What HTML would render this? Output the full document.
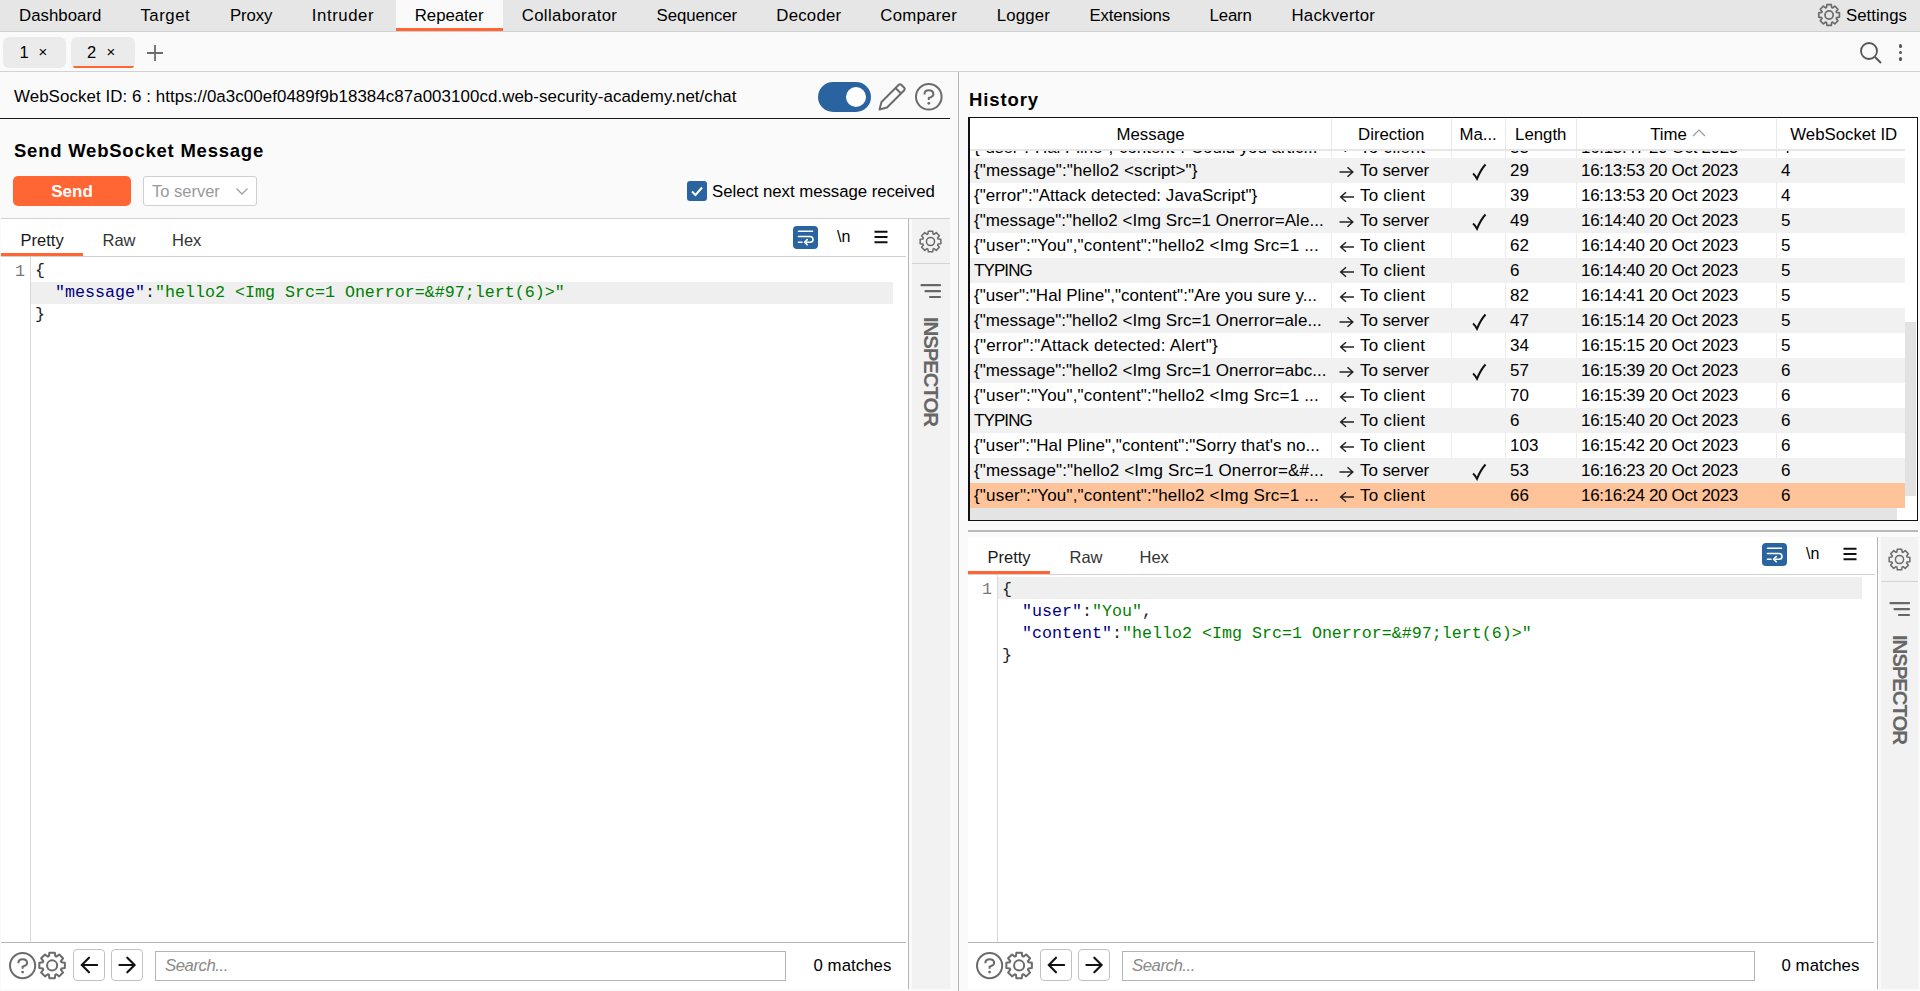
<!DOCTYPE html>
<html><head><meta charset="utf-8">
<style>
*{box-sizing:border-box;margin:0;padding:0}
html,body{width:1920px;height:991px;overflow:hidden;background:#fafafa;font-family:"Liberation Sans",sans-serif;color:#000}
.a{position:absolute}
.t{position:absolute;white-space:nowrap}
.cd{font-family:'Liberation Mono',monospace}
</style></head><body>
<div class="a" style="left:0px;top:0px;width:1920px;height:31px;background:#e6e6e6;"></div>
<div class="a" style="left:0px;top:31px;width:1920px;height:1px;background:#cdd1d2;"></div>
<div class="a" style="left:396px;top:0px;width:107px;height:31px;background:#fafafa;"></div>
<div class="a" style="left:396px;top:28px;width:107px;height:3px;background:#ff6633;"></div>
<div class="t" style="left:19px;top:4.58px;font-size:16.8px;line-height:22px;color:#000;font-weight:normal;font-style:normal;font-family:'Liberation Sans',sans-serif;letter-spacing:0.034px;">Dashboard</div>
<div class="t" style="left:140.4px;top:4.58px;font-size:16.8px;line-height:22px;color:#000;font-weight:normal;font-style:normal;font-family:'Liberation Sans',sans-serif;letter-spacing:0.534px;">Target</div>
<div class="t" style="left:229.9px;top:4.58px;font-size:16.8px;line-height:22px;color:#000;font-weight:normal;font-style:normal;font-family:'Liberation Sans',sans-serif;letter-spacing:-0.089px;">Proxy</div>
<div class="t" style="left:311.8px;top:4.58px;font-size:16.8px;line-height:22px;color:#000;font-weight:normal;font-style:normal;font-family:'Liberation Sans',sans-serif;letter-spacing:0.569px;">Intruder</div>
<div class="t" style="left:414.8px;top:4.58px;font-size:16.8px;line-height:22px;color:#000;font-weight:normal;font-style:normal;font-family:'Liberation Sans',sans-serif;letter-spacing:-0.052px;">Repeater</div>
<div class="t" style="left:521.7px;top:4.58px;font-size:16.8px;line-height:22px;color:#000;font-weight:normal;font-style:normal;font-family:'Liberation Sans',sans-serif;letter-spacing:0.348px;">Collaborator</div>
<div class="t" style="left:656.5px;top:4.58px;font-size:16.8px;line-height:22px;color:#000;font-weight:normal;font-style:normal;font-family:'Liberation Sans',sans-serif;letter-spacing:-0.063px;">Sequencer</div>
<div class="t" style="left:776.3px;top:4.58px;font-size:16.8px;line-height:22px;color:#000;font-weight:normal;font-style:normal;font-family:'Liberation Sans',sans-serif;letter-spacing:0.228px;">Decoder</div>
<div class="t" style="left:880.25px;top:4.58px;font-size:16.8px;line-height:22px;color:#000;font-weight:normal;font-style:normal;font-family:'Liberation Sans',sans-serif;letter-spacing:0.270px;">Comparer</div>
<div class="t" style="left:996.7px;top:4.58px;font-size:16.8px;line-height:22px;color:#000;font-weight:normal;font-style:normal;font-family:'Liberation Sans',sans-serif;letter-spacing:0.198px;">Logger</div>
<div class="t" style="left:1089.5px;top:4.58px;font-size:16.8px;line-height:22px;color:#000;font-weight:normal;font-style:normal;font-family:'Liberation Sans',sans-serif;letter-spacing:-0.168px;">Extensions</div>
<div class="t" style="left:1209.6px;top:4.58px;font-size:16.8px;line-height:22px;color:#000;font-weight:normal;font-style:normal;font-family:'Liberation Sans',sans-serif;letter-spacing:-0.164px;">Learn</div>
<div class="t" style="left:1291.5px;top:4.58px;font-size:16.8px;line-height:22px;color:#000;font-weight:normal;font-style:normal;font-family:'Liberation Sans',sans-serif;letter-spacing:0.248px;">Hackvertor</div>
<div class="t" style="left:1846px;top:4.58px;font-size:16.8px;line-height:22px;color:#000;font-weight:normal;font-style:normal;font-family:'Liberation Sans',sans-serif;letter-spacing:0.037px;">Settings</div>
<svg class="a" style="left:0;top:0;overflow:visible" width="1" height="1"><path d="M1826.52,7.51L1826.90,4.67L1831.30,4.67L1831.68,7.51A7.92,7.92 0 0 1 1832.57,7.88L1834.85,6.14L1837.96,9.25L1836.22,11.53A7.92,7.92 0 0 1 1836.59,12.42L1839.43,12.80L1839.43,17.20L1836.59,17.58A7.92,7.92 0 0 1 1836.22,18.47L1837.96,20.75L1834.85,23.86L1832.57,22.12A7.92,7.92 0 0 1 1831.68,22.49L1831.30,25.33L1826.90,25.33L1826.52,22.49A7.92,7.92 0 0 1 1825.63,22.12L1823.35,23.86L1820.24,20.75L1821.98,18.47A7.92,7.92 0 0 1 1821.61,17.58L1818.77,17.20L1818.77,12.80L1821.61,12.42A7.92,7.92 0 0 1 1821.98,11.53L1820.24,9.25L1823.35,6.14L1825.63,7.88A7.92,7.92 0 0 1 1826.52,7.51Z" fill="none" stroke="#6b6b6b" stroke-width="1.7" stroke-linejoin="round"/><circle cx="1829.1" cy="15" r="4.07" fill="none" stroke="#6b6b6b" stroke-width="1.7"/></svg>
<div class="a" style="left:0px;top:71px;width:1920px;height:1px;background:#d2d4d4;"></div>
<div class="a" style="left:3px;top:37px;width:63px;height:31px;background:#ebebeb;border-radius:6px"></div>
<div class="a" style="left:71px;top:37px;width:64px;height:31px;background:#ebebeb;border-radius:6px"></div>
<div class="a" style="left:73px;top:65.8px;width:60.5px;height:2.2px;background:#ff6633;border-radius:0 0 2px 2px"></div>
<div class="t" style="left:19.5px;top:41.78px;font-size:16.5px;line-height:21px;color:#000;font-weight:normal;font-style:normal;font-family:'Liberation Sans',sans-serif;">1</div>
<div class="t" style="left:87px;top:41.78px;font-size:16.5px;line-height:21px;color:#000;font-weight:normal;font-style:normal;font-family:'Liberation Sans',sans-serif;">2</div>
<div class="t" style="left:38.6px;top:41.60px;font-size:15px;line-height:20px;color:#000;font-weight:normal;font-style:normal;font-family:'Liberation Sans',sans-serif;">×</div>
<div class="t" style="left:106.6px;top:41.60px;font-size:15px;line-height:20px;color:#000;font-weight:normal;font-style:normal;font-family:'Liberation Sans',sans-serif;">×</div>
<svg class="a" style="left:146px;top:44px" width="18" height="18"><path d="M9 1V17M1 9H17" stroke="#6b6b6b" stroke-width="1.8"/></svg>
<svg class="a" style="left:1858px;top:40px" width="26" height="26"><circle cx="11" cy="11" r="8" fill="none" stroke="#555" stroke-width="1.8"/><path d="M17 17L23 23" stroke="#555" stroke-width="2"/></svg>
<div class="a" style="left:1899px;top:44.3px;width:3.4px;height:3.4px;border-radius:50%;background:#555"></div>
<div class="a" style="left:1899px;top:50.8px;width:3.4px;height:3.4px;border-radius:50%;background:#555"></div>
<div class="a" style="left:1899px;top:57.3px;width:3.4px;height:3.4px;border-radius:50%;background:#555"></div>
<div class="a" style="left:958px;top:72px;width:1px;height:919px;background:#b9b4b4;"></div>
<div class="t" style="left:14px;top:85.74px;font-size:16.9px;line-height:22px;color:#000;font-weight:normal;font-style:normal;font-family:'Liberation Sans',sans-serif;letter-spacing:0.066px;">WebSocket ID: 6 : https://0a3c00ef0489f9b18384c87a003100cd.web-security-academy.net/chat</div>
<div class="a" style="left:0px;top:118px;width:950px;height:1.2px;background:#1a1a1a;"></div>
<div class="a" style="left:818px;top:82px;width:53px;height:30px;background:#2a64a0;border-radius:15px"></div>
<div class="a" style="left:846px;top:87px;width:20px;height:20px;border-radius:50%;background:#fff"></div>
<svg class="a" style="left:876px;top:82px" width="32" height="32"><path d="M3.5 27.5 L5.5 20 L22.5 3 Q24 1.6 25.5 3 L28 5.5 Q29.4 7 28 8.5 L11 25.5 Z M19.5 6 L25 11.5" fill="none" stroke="#6b6b6b" stroke-width="2" stroke-linejoin="round"/></svg>
<svg class="a" style="left:913.5px;top:82.0px" width="29.6" height="29.6"><g transform="translate(14.8,14.8)"><circle cx="0" cy="0" r="12.8" fill="none" stroke="#6b6b6b" stroke-width="2"/><path d="M-4.35 -2.39 Q-4.35 -6.53 0 -6.53 Q4.57 -6.53 4.57 -2.61 Q4.57 -0.22 0 1.09 L0 3.26" fill="none" stroke="#6b6b6b" stroke-width="2"/><circle cx="0" cy="6.53" r="1.40" fill="#6b6b6b"/></g></svg>
<div class="t" style="left:14px;top:139.19px;font-size:18.5px;line-height:24px;color:#000;font-weight:bold;font-style:normal;font-family:'Liberation Sans',sans-serif;letter-spacing:0.770px;">Send WebSocket Message</div>
<div class="a" style="left:13px;top:176px;width:118px;height:30px;background:#ff6633;border-radius:5px"></div>
<div class="t" style="left:-228px;width:600px;text-align:center;top:180.61px;font-size:17px;line-height:22px;color:#fff;font-weight:bold;">Send</div>
<div class="a" style="left:143px;top:176px;width:114px;height:30px;background:#fff;border:1px solid #cfcfcf;border-radius:3px"></div>
<div class="t" style="left:152px;top:181.28px;font-size:16.5px;line-height:21px;color:#9a9a9a;font-weight:normal;font-style:normal;font-family:'Liberation Sans',sans-serif;">To server</div>
<svg class="a" style="left:234px;top:185px" width="16" height="12"><path d="M2.5 3.5L8 9L13.5 3.5" fill="none" stroke="#a0a0a0" stroke-width="1.3"/></svg>
<div class="a" style="left:687px;top:181px;width:20px;height:19.5px;background:#2a64a0;border-radius:3px"></div>
<svg class="a" style="left:687px;top:181px" width="20" height="20"><path d="M5 10.5L8.5 14L15 6.5" fill="none" stroke="#fff" stroke-width="2"/></svg>
<div class="t" style="left:712px;top:180.68px;font-size:16.8px;line-height:22px;color:#000;font-weight:normal;font-style:normal;font-family:'Liberation Sans',sans-serif;letter-spacing:-0.040px;">Select next message received</div>
<div class="a" style="left:1px;top:218px;width:949px;height:1px;background:#d0d0d0;"></div>
<div class="a" style="left:1px;top:219px;width:907px;height:770px;background:#fff;"></div>
<div class="a" style="left:908px;top:219px;width:1px;height:770px;background:#b9b4b4;"></div>
<div class="a" style="left:912px;top:219px;width:38px;height:770px;background:#f2f2f2;"></div>
<div class="a" style="left:912px;top:263px;width:38px;height:1px;background:#d4d4d4;"></div>
<div class="t" style="left:20.6px;top:229.78px;font-size:16.5px;line-height:21px;color:#1a1a1a;font-weight:normal;font-style:normal;font-family:'Liberation Sans',sans-serif;">Pretty</div>
<div class="t" style="left:102.5px;top:229.78px;font-size:16.5px;line-height:21px;color:#333;font-weight:normal;font-style:normal;font-family:'Liberation Sans',sans-serif;">Raw</div>
<div class="t" style="left:172px;top:229.78px;font-size:16.5px;line-height:21px;color:#333;font-weight:normal;font-style:normal;font-family:'Liberation Sans',sans-serif;">Hex</div>
<div class="a" style="left:1px;top:253px;width:82px;height:3px;background:#ff6633;"></div>
<div class="a" style="left:1px;top:256px;width:905px;height:1px;background:#d0d0d0;"></div>
<div class="t" style="left:969px;top:87.84px;font-size:18.5px;line-height:24px;color:#000;font-weight:bold;font-style:normal;font-family:'Liberation Sans',sans-serif;letter-spacing:0.894px;">History</div>
<div class="a" style="left:968px;top:117px;width:950px;height:404px;background:#fff;border:1px solid #111;border-left-width:2px"></div>
<div class="a" style="left:970px;top:149px;width:935px;height:1.5px;background:#e6e6e6;"></div>
<div class="a" style="left:1330.7px;top:119px;width:1px;height:30px;background:#e8e8e8;"></div>
<div class="a" style="left:1450.7px;top:119px;width:1px;height:30px;background:#e8e8e8;"></div>
<div class="a" style="left:1504.5px;top:119px;width:1px;height:30px;background:#e8e8e8;"></div>
<div class="a" style="left:1576.0px;top:119px;width:1px;height:30px;background:#e8e8e8;"></div>
<div class="a" style="left:1776.0px;top:119px;width:1px;height:30px;background:#e8e8e8;"></div>
<div class="t" style="left:850.5999999999999px;width:600px;text-align:center;top:124.48px;font-size:16.8px;line-height:22px;color:#000;font-weight:normal;">Message</div>
<div class="t" style="left:1091.2px;width:600px;text-align:center;top:124.48px;font-size:16.8px;line-height:22px;color:#000;font-weight:normal;">Direction</div>
<div class="t" style="left:1178.1px;width:600px;text-align:center;top:124.48px;font-size:16.8px;line-height:22px;color:#000;font-weight:normal;">Ma...</div>
<div class="t" style="left:1240.75px;width:600px;text-align:center;top:124.48px;font-size:16.8px;line-height:22px;color:#000;font-weight:normal;">Length</div>
<div class="t" style="left:1368.5px;width:600px;text-align:center;top:124.48px;font-size:16.8px;line-height:22px;color:#000;font-weight:normal;">Time</div>
<svg class="a" style="left:1691px;top:128px" width="16" height="12"><path d="M2 8L8 2L14 8" fill="none" stroke="#9a9a9a" stroke-width="1.2"/></svg>
<div class="t" style="left:1543.75px;width:600px;text-align:center;top:124.48px;font-size:16.8px;line-height:22px;color:#000;font-weight:normal;">WebSocket ID</div>
<div class="a" style="left:970px;top:150.5px;width:935px;height:357.5px;overflow:hidden">
<div class="a" style="left:-970px;top:-150.5px;width:1920px;height:991px">
<div class="a" style="left:970px;top:133px;width:935px;height:25px;background:#fff;"></div>
<div class="a" style="left:1330.7px;top:133px;width:1px;height:25px;background:#ececec;"></div>
<div class="a" style="left:1450.7px;top:133px;width:1px;height:25px;background:#ececec;"></div>
<div class="a" style="left:1504.5px;top:133px;width:1px;height:25px;background:#ececec;"></div>
<div class="a" style="left:1576.0px;top:133px;width:1px;height:25px;background:#ececec;"></div>
<div class="a" style="left:1776.0px;top:133px;width:1px;height:25px;background:#ececec;"></div>
<div class="t" style="left:974px;top:136.71px;font-size:17px;line-height:22px;color:#000;font-weight:normal;font-style:normal;font-family:'Liberation Sans',sans-serif;letter-spacing:-0.066px;">{&quot;user&quot;:&quot;Hal Pline&quot;,&quot;content&quot;:&quot;Could you artic...</div>
<svg class="a" style="left:1338px;top:141px" width="17" height="12"><path d="M16 6H2.5M8 1.2L2.7 6L8 10.8" fill="none" stroke="#222" stroke-width="1.5"/></svg>
<div class="t" style="left:1360px;top:136.71px;font-size:17px;line-height:22px;color:#000;font-weight:normal;font-style:normal;font-family:'Liberation Sans',sans-serif;letter-spacing:0.315px;">To client</div>
<div class="t" style="left:1510px;top:136.71px;font-size:17px;line-height:22px;color:#000;font-weight:normal;font-style:normal;font-family:'Liberation Sans',sans-serif;">33</div>
<div class="t" style="left:1581px;top:136.71px;font-size:17px;line-height:22px;color:#000;font-weight:normal;font-style:normal;font-family:'Liberation Sans',sans-serif;letter-spacing:-0.326px;">16:13:47 20 Oct 2023</div>
<div class="t" style="left:1781px;top:136.71px;font-size:17px;line-height:22px;color:#000;font-weight:normal;font-style:normal;font-family:'Liberation Sans',sans-serif;">4</div>
<div class="a" style="left:970px;top:158px;width:935px;height:25px;background:#f1f1f1;"></div>
<div class="t" style="left:974px;top:160.41px;font-size:17px;line-height:22px;color:#000;font-weight:normal;font-style:normal;font-family:'Liberation Sans',sans-serif;letter-spacing:0.129px;">{&quot;message&quot;:&quot;hello2 &lt;script&gt;&quot;}</div>
<svg class="a" style="left:1338px;top:166px" width="17" height="12"><path d="M1.5 6H15M9.5 1.2L14.8 6L9.5 10.8" fill="none" stroke="#222" stroke-width="1.5"/></svg>
<div class="t" style="left:1360px;top:160.41px;font-size:17px;line-height:22px;color:#000;font-weight:normal;font-style:normal;font-family:'Liberation Sans',sans-serif;letter-spacing:-0.079px;">To server</div>
<svg class="a" style="left:1471px;top:163px" width="17" height="18"><path d="M2 10.5Q4 12 6 15.8Q9.5 7 14.5 1.5" fill="none" stroke="#111" stroke-width="2"/></svg>
<div class="t" style="left:1510px;top:160.41px;font-size:17px;line-height:22px;color:#000;font-weight:normal;font-style:normal;font-family:'Liberation Sans',sans-serif;">29</div>
<div class="t" style="left:1581px;top:160.41px;font-size:17px;line-height:22px;color:#000;font-weight:normal;font-style:normal;font-family:'Liberation Sans',sans-serif;letter-spacing:-0.326px;">16:13:53 20 Oct 2023</div>
<div class="t" style="left:1781px;top:160.41px;font-size:17px;line-height:22px;color:#000;font-weight:normal;font-style:normal;font-family:'Liberation Sans',sans-serif;">4</div>
<div class="a" style="left:970px;top:183px;width:935px;height:25px;background:#fff;"></div>
<div class="a" style="left:1330.7px;top:183px;width:1px;height:25px;background:#ececec;"></div>
<div class="a" style="left:1450.7px;top:183px;width:1px;height:25px;background:#ececec;"></div>
<div class="a" style="left:1504.5px;top:183px;width:1px;height:25px;background:#ececec;"></div>
<div class="a" style="left:1576.0px;top:183px;width:1px;height:25px;background:#ececec;"></div>
<div class="a" style="left:1776.0px;top:183px;width:1px;height:25px;background:#ececec;"></div>
<div class="t" style="left:974px;top:185.41px;font-size:17px;line-height:22px;color:#000;font-weight:normal;font-style:normal;font-family:'Liberation Sans',sans-serif;letter-spacing:0.031px;">{&quot;error&quot;:&quot;Attack detected: JavaScript&quot;}</div>
<svg class="a" style="left:1338px;top:191px" width="17" height="12"><path d="M16 6H2.5M8 1.2L2.7 6L8 10.8" fill="none" stroke="#222" stroke-width="1.5"/></svg>
<div class="t" style="left:1360px;top:185.41px;font-size:17px;line-height:22px;color:#000;font-weight:normal;font-style:normal;font-family:'Liberation Sans',sans-serif;letter-spacing:0.315px;">To client</div>
<div class="t" style="left:1510px;top:185.41px;font-size:17px;line-height:22px;color:#000;font-weight:normal;font-style:normal;font-family:'Liberation Sans',sans-serif;">39</div>
<div class="t" style="left:1581px;top:185.41px;font-size:17px;line-height:22px;color:#000;font-weight:normal;font-style:normal;font-family:'Liberation Sans',sans-serif;letter-spacing:-0.326px;">16:13:53 20 Oct 2023</div>
<div class="t" style="left:1781px;top:185.41px;font-size:17px;line-height:22px;color:#000;font-weight:normal;font-style:normal;font-family:'Liberation Sans',sans-serif;">4</div>
<div class="a" style="left:970px;top:208px;width:935px;height:25px;background:#f1f1f1;"></div>
<div class="t" style="left:974px;top:210.41px;font-size:17px;line-height:22px;color:#000;font-weight:normal;font-style:normal;font-family:'Liberation Sans',sans-serif;letter-spacing:0.054px;">{&quot;message&quot;:&quot;hello2 &lt;Img Src=1 Onerror=Ale...</div>
<svg class="a" style="left:1338px;top:216px" width="17" height="12"><path d="M1.5 6H15M9.5 1.2L14.8 6L9.5 10.8" fill="none" stroke="#222" stroke-width="1.5"/></svg>
<div class="t" style="left:1360px;top:210.41px;font-size:17px;line-height:22px;color:#000;font-weight:normal;font-style:normal;font-family:'Liberation Sans',sans-serif;letter-spacing:-0.079px;">To server</div>
<svg class="a" style="left:1471px;top:213px" width="17" height="18"><path d="M2 10.5Q4 12 6 15.8Q9.5 7 14.5 1.5" fill="none" stroke="#111" stroke-width="2"/></svg>
<div class="t" style="left:1510px;top:210.41px;font-size:17px;line-height:22px;color:#000;font-weight:normal;font-style:normal;font-family:'Liberation Sans',sans-serif;">49</div>
<div class="t" style="left:1581px;top:210.41px;font-size:17px;line-height:22px;color:#000;font-weight:normal;font-style:normal;font-family:'Liberation Sans',sans-serif;letter-spacing:-0.326px;">16:14:40 20 Oct 2023</div>
<div class="t" style="left:1781px;top:210.41px;font-size:17px;line-height:22px;color:#000;font-weight:normal;font-style:normal;font-family:'Liberation Sans',sans-serif;">5</div>
<div class="a" style="left:970px;top:233px;width:935px;height:25px;background:#fff;"></div>
<div class="a" style="left:1330.7px;top:233px;width:1px;height:25px;background:#ececec;"></div>
<div class="a" style="left:1450.7px;top:233px;width:1px;height:25px;background:#ececec;"></div>
<div class="a" style="left:1504.5px;top:233px;width:1px;height:25px;background:#ececec;"></div>
<div class="a" style="left:1576.0px;top:233px;width:1px;height:25px;background:#ececec;"></div>
<div class="a" style="left:1776.0px;top:233px;width:1px;height:25px;background:#ececec;"></div>
<div class="t" style="left:974px;top:235.41px;font-size:17px;line-height:22px;color:#000;font-weight:normal;font-style:normal;font-family:'Liberation Sans',sans-serif;letter-spacing:0.183px;">{&quot;user&quot;:&quot;You&quot;,&quot;content&quot;:&quot;hello2 &lt;Img Src=1 ...</div>
<svg class="a" style="left:1338px;top:241px" width="17" height="12"><path d="M16 6H2.5M8 1.2L2.7 6L8 10.8" fill="none" stroke="#222" stroke-width="1.5"/></svg>
<div class="t" style="left:1360px;top:235.41px;font-size:17px;line-height:22px;color:#000;font-weight:normal;font-style:normal;font-family:'Liberation Sans',sans-serif;letter-spacing:0.315px;">To client</div>
<div class="t" style="left:1510px;top:235.41px;font-size:17px;line-height:22px;color:#000;font-weight:normal;font-style:normal;font-family:'Liberation Sans',sans-serif;">62</div>
<div class="t" style="left:1581px;top:235.41px;font-size:17px;line-height:22px;color:#000;font-weight:normal;font-style:normal;font-family:'Liberation Sans',sans-serif;letter-spacing:-0.326px;">16:14:40 20 Oct 2023</div>
<div class="t" style="left:1781px;top:235.41px;font-size:17px;line-height:22px;color:#000;font-weight:normal;font-style:normal;font-family:'Liberation Sans',sans-serif;">5</div>
<div class="a" style="left:970px;top:258px;width:935px;height:25px;background:#f1f1f1;"></div>
<div class="t" style="left:974px;top:260.41px;font-size:17px;line-height:22px;color:#000;font-weight:normal;font-style:normal;font-family:'Liberation Sans',sans-serif;letter-spacing:-0.914px;">TYPING</div>
<svg class="a" style="left:1338px;top:266px" width="17" height="12"><path d="M16 6H2.5M8 1.2L2.7 6L8 10.8" fill="none" stroke="#222" stroke-width="1.5"/></svg>
<div class="t" style="left:1360px;top:260.41px;font-size:17px;line-height:22px;color:#000;font-weight:normal;font-style:normal;font-family:'Liberation Sans',sans-serif;letter-spacing:0.315px;">To client</div>
<div class="t" style="left:1510px;top:260.41px;font-size:17px;line-height:22px;color:#000;font-weight:normal;font-style:normal;font-family:'Liberation Sans',sans-serif;">6</div>
<div class="t" style="left:1581px;top:260.41px;font-size:17px;line-height:22px;color:#000;font-weight:normal;font-style:normal;font-family:'Liberation Sans',sans-serif;letter-spacing:-0.326px;">16:14:40 20 Oct 2023</div>
<div class="t" style="left:1781px;top:260.41px;font-size:17px;line-height:22px;color:#000;font-weight:normal;font-style:normal;font-family:'Liberation Sans',sans-serif;">5</div>
<div class="a" style="left:970px;top:283px;width:935px;height:25px;background:#fff;"></div>
<div class="a" style="left:1330.7px;top:283px;width:1px;height:25px;background:#ececec;"></div>
<div class="a" style="left:1450.7px;top:283px;width:1px;height:25px;background:#ececec;"></div>
<div class="a" style="left:1504.5px;top:283px;width:1px;height:25px;background:#ececec;"></div>
<div class="a" style="left:1576.0px;top:283px;width:1px;height:25px;background:#ececec;"></div>
<div class="a" style="left:1776.0px;top:283px;width:1px;height:25px;background:#ececec;"></div>
<div class="t" style="left:974px;top:285.41px;font-size:17px;line-height:22px;color:#000;font-weight:normal;font-style:normal;font-family:'Liberation Sans',sans-serif;letter-spacing:0.032px;">{&quot;user&quot;:&quot;Hal Pline&quot;,&quot;content&quot;:&quot;Are you sure y...</div>
<svg class="a" style="left:1338px;top:291px" width="17" height="12"><path d="M16 6H2.5M8 1.2L2.7 6L8 10.8" fill="none" stroke="#222" stroke-width="1.5"/></svg>
<div class="t" style="left:1360px;top:285.41px;font-size:17px;line-height:22px;color:#000;font-weight:normal;font-style:normal;font-family:'Liberation Sans',sans-serif;letter-spacing:0.315px;">To client</div>
<div class="t" style="left:1510px;top:285.41px;font-size:17px;line-height:22px;color:#000;font-weight:normal;font-style:normal;font-family:'Liberation Sans',sans-serif;">82</div>
<div class="t" style="left:1581px;top:285.41px;font-size:17px;line-height:22px;color:#000;font-weight:normal;font-style:normal;font-family:'Liberation Sans',sans-serif;letter-spacing:-0.326px;">16:14:41 20 Oct 2023</div>
<div class="t" style="left:1781px;top:285.41px;font-size:17px;line-height:22px;color:#000;font-weight:normal;font-style:normal;font-family:'Liberation Sans',sans-serif;">5</div>
<div class="a" style="left:970px;top:308px;width:935px;height:25px;background:#f1f1f1;"></div>
<div class="t" style="left:974px;top:310.41px;font-size:17px;line-height:22px;color:#000;font-weight:normal;font-style:normal;font-family:'Liberation Sans',sans-serif;letter-spacing:0.051px;">{&quot;message&quot;:&quot;hello2 &lt;Img Src=1 Onerror=ale...</div>
<svg class="a" style="left:1338px;top:316px" width="17" height="12"><path d="M1.5 6H15M9.5 1.2L14.8 6L9.5 10.8" fill="none" stroke="#222" stroke-width="1.5"/></svg>
<div class="t" style="left:1360px;top:310.41px;font-size:17px;line-height:22px;color:#000;font-weight:normal;font-style:normal;font-family:'Liberation Sans',sans-serif;letter-spacing:-0.079px;">To server</div>
<svg class="a" style="left:1471px;top:313px" width="17" height="18"><path d="M2 10.5Q4 12 6 15.8Q9.5 7 14.5 1.5" fill="none" stroke="#111" stroke-width="2"/></svg>
<div class="t" style="left:1510px;top:310.41px;font-size:17px;line-height:22px;color:#000;font-weight:normal;font-style:normal;font-family:'Liberation Sans',sans-serif;">47</div>
<div class="t" style="left:1581px;top:310.41px;font-size:17px;line-height:22px;color:#000;font-weight:normal;font-style:normal;font-family:'Liberation Sans',sans-serif;letter-spacing:-0.326px;">16:15:14 20 Oct 2023</div>
<div class="t" style="left:1781px;top:310.41px;font-size:17px;line-height:22px;color:#000;font-weight:normal;font-style:normal;font-family:'Liberation Sans',sans-serif;">5</div>
<div class="a" style="left:970px;top:333px;width:935px;height:25px;background:#fff;"></div>
<div class="a" style="left:1330.7px;top:333px;width:1px;height:25px;background:#ececec;"></div>
<div class="a" style="left:1450.7px;top:333px;width:1px;height:25px;background:#ececec;"></div>
<div class="a" style="left:1504.5px;top:333px;width:1px;height:25px;background:#ececec;"></div>
<div class="a" style="left:1576.0px;top:333px;width:1px;height:25px;background:#ececec;"></div>
<div class="a" style="left:1776.0px;top:333px;width:1px;height:25px;background:#ececec;"></div>
<div class="t" style="left:974px;top:335.41px;font-size:17px;line-height:22px;color:#000;font-weight:normal;font-style:normal;font-family:'Liberation Sans',sans-serif;letter-spacing:0.207px;">{&quot;error&quot;:&quot;Attack detected: Alert&quot;}</div>
<svg class="a" style="left:1338px;top:341px" width="17" height="12"><path d="M16 6H2.5M8 1.2L2.7 6L8 10.8" fill="none" stroke="#222" stroke-width="1.5"/></svg>
<div class="t" style="left:1360px;top:335.41px;font-size:17px;line-height:22px;color:#000;font-weight:normal;font-style:normal;font-family:'Liberation Sans',sans-serif;letter-spacing:0.315px;">To client</div>
<div class="t" style="left:1510px;top:335.41px;font-size:17px;line-height:22px;color:#000;font-weight:normal;font-style:normal;font-family:'Liberation Sans',sans-serif;">34</div>
<div class="t" style="left:1581px;top:335.41px;font-size:17px;line-height:22px;color:#000;font-weight:normal;font-style:normal;font-family:'Liberation Sans',sans-serif;letter-spacing:-0.326px;">16:15:15 20 Oct 2023</div>
<div class="t" style="left:1781px;top:335.41px;font-size:17px;line-height:22px;color:#000;font-weight:normal;font-style:normal;font-family:'Liberation Sans',sans-serif;">5</div>
<div class="a" style="left:970px;top:358px;width:935px;height:25px;background:#f1f1f1;"></div>
<div class="t" style="left:974px;top:360.41px;font-size:17px;line-height:22px;color:#000;font-weight:normal;font-style:normal;font-family:'Liberation Sans',sans-serif;letter-spacing:0.053px;">{&quot;message&quot;:&quot;hello2 &lt;Img Src=1 Onerror=abc...</div>
<svg class="a" style="left:1338px;top:366px" width="17" height="12"><path d="M1.5 6H15M9.5 1.2L14.8 6L9.5 10.8" fill="none" stroke="#222" stroke-width="1.5"/></svg>
<div class="t" style="left:1360px;top:360.41px;font-size:17px;line-height:22px;color:#000;font-weight:normal;font-style:normal;font-family:'Liberation Sans',sans-serif;letter-spacing:-0.079px;">To server</div>
<svg class="a" style="left:1471px;top:363px" width="17" height="18"><path d="M2 10.5Q4 12 6 15.8Q9.5 7 14.5 1.5" fill="none" stroke="#111" stroke-width="2"/></svg>
<div class="t" style="left:1510px;top:360.41px;font-size:17px;line-height:22px;color:#000;font-weight:normal;font-style:normal;font-family:'Liberation Sans',sans-serif;">57</div>
<div class="t" style="left:1581px;top:360.41px;font-size:17px;line-height:22px;color:#000;font-weight:normal;font-style:normal;font-family:'Liberation Sans',sans-serif;letter-spacing:-0.326px;">16:15:39 20 Oct 2023</div>
<div class="t" style="left:1781px;top:360.41px;font-size:17px;line-height:22px;color:#000;font-weight:normal;font-style:normal;font-family:'Liberation Sans',sans-serif;">6</div>
<div class="a" style="left:970px;top:383px;width:935px;height:25px;background:#fff;"></div>
<div class="a" style="left:1330.7px;top:383px;width:1px;height:25px;background:#ececec;"></div>
<div class="a" style="left:1450.7px;top:383px;width:1px;height:25px;background:#ececec;"></div>
<div class="a" style="left:1504.5px;top:383px;width:1px;height:25px;background:#ececec;"></div>
<div class="a" style="left:1576.0px;top:383px;width:1px;height:25px;background:#ececec;"></div>
<div class="a" style="left:1776.0px;top:383px;width:1px;height:25px;background:#ececec;"></div>
<div class="t" style="left:974px;top:385.41px;font-size:17px;line-height:22px;color:#000;font-weight:normal;font-style:normal;font-family:'Liberation Sans',sans-serif;letter-spacing:0.183px;">{&quot;user&quot;:&quot;You&quot;,&quot;content&quot;:&quot;hello2 &lt;Img Src=1 ...</div>
<svg class="a" style="left:1338px;top:391px" width="17" height="12"><path d="M16 6H2.5M8 1.2L2.7 6L8 10.8" fill="none" stroke="#222" stroke-width="1.5"/></svg>
<div class="t" style="left:1360px;top:385.41px;font-size:17px;line-height:22px;color:#000;font-weight:normal;font-style:normal;font-family:'Liberation Sans',sans-serif;letter-spacing:0.315px;">To client</div>
<div class="t" style="left:1510px;top:385.41px;font-size:17px;line-height:22px;color:#000;font-weight:normal;font-style:normal;font-family:'Liberation Sans',sans-serif;">70</div>
<div class="t" style="left:1581px;top:385.41px;font-size:17px;line-height:22px;color:#000;font-weight:normal;font-style:normal;font-family:'Liberation Sans',sans-serif;letter-spacing:-0.326px;">16:15:39 20 Oct 2023</div>
<div class="t" style="left:1781px;top:385.41px;font-size:17px;line-height:22px;color:#000;font-weight:normal;font-style:normal;font-family:'Liberation Sans',sans-serif;">6</div>
<div class="a" style="left:970px;top:408px;width:935px;height:25px;background:#f1f1f1;"></div>
<div class="t" style="left:974px;top:410.41px;font-size:17px;line-height:22px;color:#000;font-weight:normal;font-style:normal;font-family:'Liberation Sans',sans-serif;letter-spacing:-0.914px;">TYPING</div>
<svg class="a" style="left:1338px;top:416px" width="17" height="12"><path d="M16 6H2.5M8 1.2L2.7 6L8 10.8" fill="none" stroke="#222" stroke-width="1.5"/></svg>
<div class="t" style="left:1360px;top:410.41px;font-size:17px;line-height:22px;color:#000;font-weight:normal;font-style:normal;font-family:'Liberation Sans',sans-serif;letter-spacing:0.315px;">To client</div>
<div class="t" style="left:1510px;top:410.41px;font-size:17px;line-height:22px;color:#000;font-weight:normal;font-style:normal;font-family:'Liberation Sans',sans-serif;">6</div>
<div class="t" style="left:1581px;top:410.41px;font-size:17px;line-height:22px;color:#000;font-weight:normal;font-style:normal;font-family:'Liberation Sans',sans-serif;letter-spacing:-0.326px;">16:15:40 20 Oct 2023</div>
<div class="t" style="left:1781px;top:410.41px;font-size:17px;line-height:22px;color:#000;font-weight:normal;font-style:normal;font-family:'Liberation Sans',sans-serif;">6</div>
<div class="a" style="left:970px;top:433px;width:935px;height:25px;background:#fff;"></div>
<div class="a" style="left:1330.7px;top:433px;width:1px;height:25px;background:#ececec;"></div>
<div class="a" style="left:1450.7px;top:433px;width:1px;height:25px;background:#ececec;"></div>
<div class="a" style="left:1504.5px;top:433px;width:1px;height:25px;background:#ececec;"></div>
<div class="a" style="left:1576.0px;top:433px;width:1px;height:25px;background:#ececec;"></div>
<div class="a" style="left:1776.0px;top:433px;width:1px;height:25px;background:#ececec;"></div>
<div class="t" style="left:974px;top:435.41px;font-size:17px;line-height:22px;color:#000;font-weight:normal;font-style:normal;font-family:'Liberation Sans',sans-serif;letter-spacing:0.075px;">{&quot;user&quot;:&quot;Hal Pline&quot;,&quot;content&quot;:&quot;Sorry that&#x27;s no...</div>
<svg class="a" style="left:1338px;top:441px" width="17" height="12"><path d="M16 6H2.5M8 1.2L2.7 6L8 10.8" fill="none" stroke="#222" stroke-width="1.5"/></svg>
<div class="t" style="left:1360px;top:435.41px;font-size:17px;line-height:22px;color:#000;font-weight:normal;font-style:normal;font-family:'Liberation Sans',sans-serif;letter-spacing:0.315px;">To client</div>
<div class="t" style="left:1510px;top:435.41px;font-size:17px;line-height:22px;color:#000;font-weight:normal;font-style:normal;font-family:'Liberation Sans',sans-serif;">103</div>
<div class="t" style="left:1581px;top:435.41px;font-size:17px;line-height:22px;color:#000;font-weight:normal;font-style:normal;font-family:'Liberation Sans',sans-serif;letter-spacing:-0.326px;">16:15:42 20 Oct 2023</div>
<div class="t" style="left:1781px;top:435.41px;font-size:17px;line-height:22px;color:#000;font-weight:normal;font-style:normal;font-family:'Liberation Sans',sans-serif;">6</div>
<div class="a" style="left:970px;top:458px;width:935px;height:25px;background:#f1f1f1;"></div>
<div class="t" style="left:974px;top:460.41px;font-size:17px;line-height:22px;color:#000;font-weight:normal;font-style:normal;font-family:'Liberation Sans',sans-serif;letter-spacing:0.143px;">{&quot;message&quot;:&quot;hello2 &lt;Img Src=1 Onerror=&amp;#...</div>
<svg class="a" style="left:1338px;top:466px" width="17" height="12"><path d="M1.5 6H15M9.5 1.2L14.8 6L9.5 10.8" fill="none" stroke="#222" stroke-width="1.5"/></svg>
<div class="t" style="left:1360px;top:460.41px;font-size:17px;line-height:22px;color:#000;font-weight:normal;font-style:normal;font-family:'Liberation Sans',sans-serif;letter-spacing:-0.079px;">To server</div>
<svg class="a" style="left:1471px;top:463px" width="17" height="18"><path d="M2 10.5Q4 12 6 15.8Q9.5 7 14.5 1.5" fill="none" stroke="#111" stroke-width="2"/></svg>
<div class="t" style="left:1510px;top:460.41px;font-size:17px;line-height:22px;color:#000;font-weight:normal;font-style:normal;font-family:'Liberation Sans',sans-serif;">53</div>
<div class="t" style="left:1581px;top:460.41px;font-size:17px;line-height:22px;color:#000;font-weight:normal;font-style:normal;font-family:'Liberation Sans',sans-serif;letter-spacing:-0.326px;">16:16:23 20 Oct 2023</div>
<div class="t" style="left:1781px;top:460.41px;font-size:17px;line-height:22px;color:#000;font-weight:normal;font-style:normal;font-family:'Liberation Sans',sans-serif;">6</div>
<div class="a" style="left:970px;top:483px;width:935px;height:25px;background:#fec399;"></div>
<div class="t" style="left:974px;top:485.41px;font-size:17px;line-height:22px;color:#000;font-weight:normal;font-style:normal;font-family:'Liberation Sans',sans-serif;letter-spacing:0.183px;">{&quot;user&quot;:&quot;You&quot;,&quot;content&quot;:&quot;hello2 &lt;Img Src=1 ...</div>
<svg class="a" style="left:1338px;top:491px" width="17" height="12"><path d="M16 6H2.5M8 1.2L2.7 6L8 10.8" fill="none" stroke="#222" stroke-width="1.5"/></svg>
<div class="t" style="left:1360px;top:485.41px;font-size:17px;line-height:22px;color:#000;font-weight:normal;font-style:normal;font-family:'Liberation Sans',sans-serif;letter-spacing:0.315px;">To client</div>
<div class="t" style="left:1510px;top:485.41px;font-size:17px;line-height:22px;color:#000;font-weight:normal;font-style:normal;font-family:'Liberation Sans',sans-serif;">66</div>
<div class="t" style="left:1581px;top:485.41px;font-size:17px;line-height:22px;color:#000;font-weight:normal;font-style:normal;font-family:'Liberation Sans',sans-serif;letter-spacing:-0.326px;">16:16:24 20 Oct 2023</div>
<div class="t" style="left:1781px;top:485.41px;font-size:17px;line-height:22px;color:#000;font-weight:normal;font-style:normal;font-family:'Liberation Sans',sans-serif;">6</div>
</div></div>
<div class="a" style="left:1905px;top:322px;width:11px;height:174px;background:#e2e2e2;"></div>
<div class="a" style="left:970px;top:508px;width:927px;height:12px;background:#e4e4e4;"></div>
<div class="a" style="left:968px;top:530px;width:950px;height:1.5px;background:#bdb8b8;"></div>
<div class="a" style="left:968px;top:537px;width:909px;height:452px;background:#fff;"></div>
<div class="a" style="left:1877px;top:537px;width:1px;height:452px;background:#b9b4b4;"></div>
<div class="a" style="left:1881px;top:537px;width:37px;height:452px;background:#f2f2f2;"></div>
<div class="a" style="left:1881px;top:581px;width:37px;height:1px;background:#d4d4d4;"></div>
<div class="t" style="left:987.5px;top:546.78px;font-size:16.5px;line-height:21px;color:#1a1a1a;font-weight:normal;font-style:normal;font-family:'Liberation Sans',sans-serif;">Pretty</div>
<div class="t" style="left:1069.5px;top:546.78px;font-size:16.5px;line-height:21px;color:#333;font-weight:normal;font-style:normal;font-family:'Liberation Sans',sans-serif;">Raw</div>
<div class="t" style="left:1139.5px;top:546.78px;font-size:16.5px;line-height:21px;color:#333;font-weight:normal;font-style:normal;font-family:'Liberation Sans',sans-serif;">Hex</div>
<div class="a" style="left:968px;top:571px;width:82px;height:3px;background:#ff6633;"></div>
<div class="a" style="left:968px;top:573.5px;width:907px;height:1px;background:#d0d0d0;"></div>
<div class="a" style="left:30px;top:257px;width:1px;height:686px;background:#d9d9d9;"></div>
<div class="a" style="left:31px;top:282px;width:862px;height:22px;background:#efefef;"></div>
<div class="t cd" style="left:15px;top:260.56px;font-size:16.67px;line-height:22px"><span style="color:#777">1</span></div>
<div class="t cd" style="left:35px;top:260.06px;font-size:16.67px;line-height:22px"><span style="color:#222">{</span></div>
<div class="t cd" style="left:55px;top:282.06px;font-size:16.67px;line-height:22px"><span style="color:#000080">&quot;message&quot;</span><span style="color:#222">:</span><span style="color:#008000">&quot;hello2 &lt;Img Src=1 Onerror=&amp;#97;lert(6)&gt;&quot;</span></div>
<div class="t cd" style="left:35px;top:304.06px;font-size:16.67px;line-height:22px"><span style="color:#222">}</span></div>
<div class="a" style="left:997px;top:574px;width:1px;height:369px;background:#d9d9d9;"></div>
<div class="a" style="left:998px;top:577px;width:864px;height:22px;background:#efefef;"></div>
<div class="t cd" style="left:982px;top:578.56px;font-size:16.67px;line-height:22px"><span style="color:#777">1</span></div>
<div class="t cd" style="left:1002px;top:578.56px;font-size:16.67px;line-height:22px"><span style="color:#222">{</span></div>
<div class="t cd" style="left:1022px;top:600.56px;font-size:16.67px;line-height:22px"><span style="color:#000080">&quot;user&quot;</span><span style="color:#222">:</span><span style="color:#008000">&quot;You&quot;</span><span style="color:#222">,</span></div>
<div class="t cd" style="left:1022px;top:622.56px;font-size:16.67px;line-height:22px"><span style="color:#000080">&quot;content&quot;</span><span style="color:#222">:</span><span style="color:#008000">&quot;hello2 &lt;Img Src=1 Onerror=&amp;#97;lert(6)&gt;&quot;</span></div>
<div class="t cd" style="left:1002px;top:644.56px;font-size:16.67px;line-height:22px"><span style="color:#222">}</span></div>
<div class="a" style="left:793px;top:226px;width:25px;height:23px;background:#2a64a0;border-radius:4px"></div>
<svg class="a" style="left:793px;top:226px" width="25" height="23"><path d="M5.5 5.2H19.5M5.5 10.5H17Q20 10.5 20 13.5Q20 16.2 17 16.2H13M5.5 16.2H9" fill="none" stroke="#fff" stroke-width="1.6" stroke-linecap="round"/><path d="M14.2 13.6L11.6 16.2L14.2 18.8" fill="none" stroke="#fff" stroke-width="1.6" stroke-linecap="round" stroke-linejoin="round"/></svg>
<div class="t" style="left:837px;top:228px;font-size:16px;line-height:18px;">&#92;n</div>
<svg class="a" style="left:874px;top:230px" width="14" height="14"><path d="M0.5 1.8H13.5M0.5 7H13.5M0.5 12.2H13.5" stroke="#111" stroke-width="2"/></svg>
<div class="a" style="left:1762px;top:543px;width:25px;height:23px;background:#2a64a0;border-radius:4px"></div>
<svg class="a" style="left:1762px;top:543px" width="25" height="23"><path d="M5.5 5.2H19.5M5.5 10.5H17Q20 10.5 20 13.5Q20 16.2 17 16.2H13M5.5 16.2H9" fill="none" stroke="#fff" stroke-width="1.6" stroke-linecap="round"/><path d="M14.2 13.6L11.6 16.2L14.2 18.8" fill="none" stroke="#fff" stroke-width="1.6" stroke-linecap="round" stroke-linejoin="round"/></svg>
<div class="t" style="left:1806px;top:545px;font-size:16px;line-height:18px;">&#92;n</div>
<svg class="a" style="left:1843px;top:547px" width="14" height="14"><path d="M0.5 1.8H13.5M0.5 7H13.5M0.5 12.2H13.5" stroke="#111" stroke-width="2"/></svg>
<svg class="a" style="left:0;top:0;overflow:visible" width="1" height="1"><path d="M927.92,234.01L928.30,231.17L932.70,231.17L933.08,234.01A7.92,7.92 0 0 1 933.97,234.38L936.25,232.64L939.36,235.75L937.62,238.03A7.92,7.92 0 0 1 937.99,238.92L940.83,239.30L940.83,243.70L937.99,244.08A7.92,7.92 0 0 1 937.62,244.97L939.36,247.25L936.25,250.36L933.97,248.62A7.92,7.92 0 0 1 933.08,248.99L932.70,251.83L928.30,251.83L927.92,248.99A7.92,7.92 0 0 1 927.03,248.62L924.75,250.36L921.64,247.25L923.38,244.97A7.92,7.92 0 0 1 923.01,244.08L920.17,243.70L920.17,239.30L923.01,238.92A7.92,7.92 0 0 1 923.38,238.03L921.64,235.75L924.75,232.64L927.03,234.38A7.92,7.92 0 0 1 927.92,234.01Z" fill="none" stroke="#6b6b6b" stroke-width="1.5" stroke-linejoin="round"/><circle cx="930.5" cy="241.5" r="4.07" fill="none" stroke="#6b6b6b" stroke-width="1.5"/></svg>
<svg class="a" style="left:920px;top:283px" width="22" height="16"><path d="M1.5 2.2H20M5.5 8.2H20M10 14H20" stroke="#676767" stroke-width="2.2" stroke-linecap="round"/></svg>
<div class="t" style="left:941.60px;top:317px;font-size:20.5px;line-height:22px;font-weight:bold;color:#676767;letter-spacing:-1.131px;transform-origin:0 0;transform:rotate(90deg)">INSPECTOR</div>
<svg class="a" style="left:0;top:0;overflow:visible" width="1" height="1"><path d="M1896.92,552.01L1897.30,549.17L1901.70,549.17L1902.08,552.01A7.92,7.92 0 0 1 1902.97,552.38L1905.25,550.64L1908.36,553.75L1906.62,556.03A7.92,7.92 0 0 1 1906.99,556.92L1909.83,557.30L1909.83,561.70L1906.99,562.08A7.92,7.92 0 0 1 1906.62,562.97L1908.36,565.25L1905.25,568.36L1902.97,566.62A7.92,7.92 0 0 1 1902.08,566.99L1901.70,569.83L1897.30,569.83L1896.92,566.99A7.92,7.92 0 0 1 1896.03,566.62L1893.75,568.36L1890.64,565.25L1892.38,562.97A7.92,7.92 0 0 1 1892.01,562.08L1889.17,561.70L1889.17,557.30L1892.01,556.92A7.92,7.92 0 0 1 1892.38,556.03L1890.64,553.75L1893.75,550.64L1896.03,552.38A7.92,7.92 0 0 1 1896.92,552.01Z" fill="none" stroke="#6b6b6b" stroke-width="1.5" stroke-linejoin="round"/><circle cx="1899.5" cy="559.5" r="4.07" fill="none" stroke="#6b6b6b" stroke-width="1.5"/></svg>
<svg class="a" style="left:1889px;top:601px" width="22" height="16"><path d="M1.5 2.2H20M5.5 8.2H20M10 14H20" stroke="#676767" stroke-width="2.2" stroke-linecap="round"/></svg>
<div class="t" style="left:1910.60px;top:635px;font-size:20.5px;line-height:22px;font-weight:bold;color:#676767;letter-spacing:-1.131px;transform-origin:0 0;transform:rotate(90deg)">INSPECTOR</div>
<div class="a" style="left:1px;top:942px;width:905px;height:1px;background:#b9b4b4;"></div>
<svg class="a" style="left:7.500000000000002px;top:950.8px" width="29.2" height="29.2"><g transform="translate(14.6,14.6)"><circle cx="0" cy="0" r="12.6" fill="none" stroke="#6b6b6b" stroke-width="2"/><path d="M-4.28 -2.36 Q-4.28 -6.43 0 -6.43 Q4.50 -6.43 4.50 -2.57 Q4.50 -0.21 0 1.07 L0 3.21" fill="none" stroke="#6b6b6b" stroke-width="2"/><circle cx="0" cy="6.43" r="1.40" fill="#6b6b6b"/></g></svg>
<svg class="a" style="left:0;top:0;overflow:visible" width="1" height="1"><path d="M48.91,956.14L49.39,952.63L54.81,952.63L55.29,956.14A9.79,9.79 0 0 1 56.39,956.60L59.21,954.45L63.05,958.29L60.90,961.11A9.79,9.79 0 0 1 61.36,962.21L64.87,962.69L64.87,968.11L61.36,968.59A9.79,9.79 0 0 1 60.90,969.69L63.05,972.51L59.21,976.35L56.39,974.20A9.79,9.79 0 0 1 55.29,974.66L54.81,978.17L49.39,978.17L48.91,974.66A9.79,9.79 0 0 1 47.81,974.20L44.99,976.35L41.15,972.51L43.30,969.69A9.79,9.79 0 0 1 42.84,968.59L39.33,968.11L39.33,962.69L42.84,962.21A9.79,9.79 0 0 1 43.30,961.11L41.15,958.29L44.99,954.45L47.81,956.60A9.79,9.79 0 0 1 48.91,956.14Z" fill="none" stroke="#6b6b6b" stroke-width="2" stroke-linejoin="round"/><circle cx="52.1" cy="965.4" r="5.03" fill="none" stroke="#6b6b6b" stroke-width="2"/></svg>
<div class="a" style="left:73px;top:949px;width:32px;height:31.5px;background:#fff;border:1px solid #c4c0c0;border-radius:4px"></div>
<svg class="a" style="left:73px;top:949px" width="32" height="32"><path d="M24.2 16H9M16 8.7L8.8 16L16 23.3" fill="none" stroke="#111" stroke-width="2.1" stroke-linecap="round"/></svg>
<div class="a" style="left:111px;top:949px;width:32px;height:31.5px;background:#fff;border:1px solid #c4c0c0;border-radius:4px"></div>
<svg class="a" style="left:111px;top:949px" width="32" height="32"><path d="M8.4 16H23.5M16.3 8.7L23.6 16L16.3 23.3" fill="none" stroke="#111" stroke-width="2.1" stroke-linecap="round"/></svg>
<div class="a" style="left:155px;top:951px;width:631px;height:30px;background:#fff;border:1px solid #b8b3b3"></div>
<div class="t" style="left:165px;top:954.93px;font-size:16.8px;line-height:22px;color:#8a8a8a;font-weight:normal;font-style:italic;font-family:'Liberation Sans',sans-serif;letter-spacing:-0.470px;">Search...</div>
<div class="t" style="left:813.5px;top:954.93px;font-size:16.8px;line-height:22px;color:#000;font-weight:normal;font-style:normal;font-family:'Liberation Sans',sans-serif;letter-spacing:0.055px;">0 matches</div>
<div class="a" style="left:968px;top:942px;width:906px;height:1px;background:#b9b4b4;"></div>
<svg class="a" style="left:974.5px;top:950.8px" width="29.2" height="29.2"><g transform="translate(14.6,14.6)"><circle cx="0" cy="0" r="12.6" fill="none" stroke="#6b6b6b" stroke-width="2"/><path d="M-4.28 -2.36 Q-4.28 -6.43 0 -6.43 Q4.50 -6.43 4.50 -2.57 Q4.50 -0.21 0 1.07 L0 3.21" fill="none" stroke="#6b6b6b" stroke-width="2"/><circle cx="0" cy="6.43" r="1.40" fill="#6b6b6b"/></g></svg>
<svg class="a" style="left:0;top:0;overflow:visible" width="1" height="1"><path d="M1015.91,956.14L1016.39,952.63L1021.81,952.63L1022.29,956.14A9.79,9.79 0 0 1 1023.39,956.60L1026.21,954.45L1030.05,958.29L1027.90,961.11A9.79,9.79 0 0 1 1028.36,962.21L1031.87,962.69L1031.87,968.11L1028.36,968.59A9.79,9.79 0 0 1 1027.90,969.69L1030.05,972.51L1026.21,976.35L1023.39,974.20A9.79,9.79 0 0 1 1022.29,974.66L1021.81,978.17L1016.39,978.17L1015.91,974.66A9.79,9.79 0 0 1 1014.81,974.20L1011.99,976.35L1008.15,972.51L1010.30,969.69A9.79,9.79 0 0 1 1009.84,968.59L1006.33,968.11L1006.33,962.69L1009.84,962.21A9.79,9.79 0 0 1 1010.30,961.11L1008.15,958.29L1011.99,954.45L1014.81,956.60A9.79,9.79 0 0 1 1015.91,956.14Z" fill="none" stroke="#6b6b6b" stroke-width="2" stroke-linejoin="round"/><circle cx="1019.1" cy="965.4" r="5.03" fill="none" stroke="#6b6b6b" stroke-width="2"/></svg>
<div class="a" style="left:1040px;top:949px;width:32px;height:31.5px;background:#fff;border:1px solid #c4c0c0;border-radius:4px"></div>
<svg class="a" style="left:1040px;top:949px" width="32" height="32"><path d="M24.2 16H9M16 8.7L8.8 16L16 23.3" fill="none" stroke="#111" stroke-width="2.1" stroke-linecap="round"/></svg>
<div class="a" style="left:1078px;top:949px;width:32px;height:31.5px;background:#fff;border:1px solid #c4c0c0;border-radius:4px"></div>
<svg class="a" style="left:1078px;top:949px" width="32" height="32"><path d="M8.4 16H23.5M16.3 8.7L23.6 16L16.3 23.3" fill="none" stroke="#111" stroke-width="2.1" stroke-linecap="round"/></svg>
<div class="a" style="left:1122px;top:951px;width:633px;height:30px;background:#fff;border:1px solid #b8b3b3"></div>
<div class="t" style="left:1132px;top:954.93px;font-size:16.8px;line-height:22px;color:#8a8a8a;font-weight:normal;font-style:italic;font-family:'Liberation Sans',sans-serif;letter-spacing:-0.470px;">Search...</div>
<div class="t" style="left:1781.5px;top:954.93px;font-size:16.8px;line-height:22px;color:#000;font-weight:normal;font-style:normal;font-family:'Liberation Sans',sans-serif;letter-spacing:0.055px;">0 matches</div>
</body></html>
